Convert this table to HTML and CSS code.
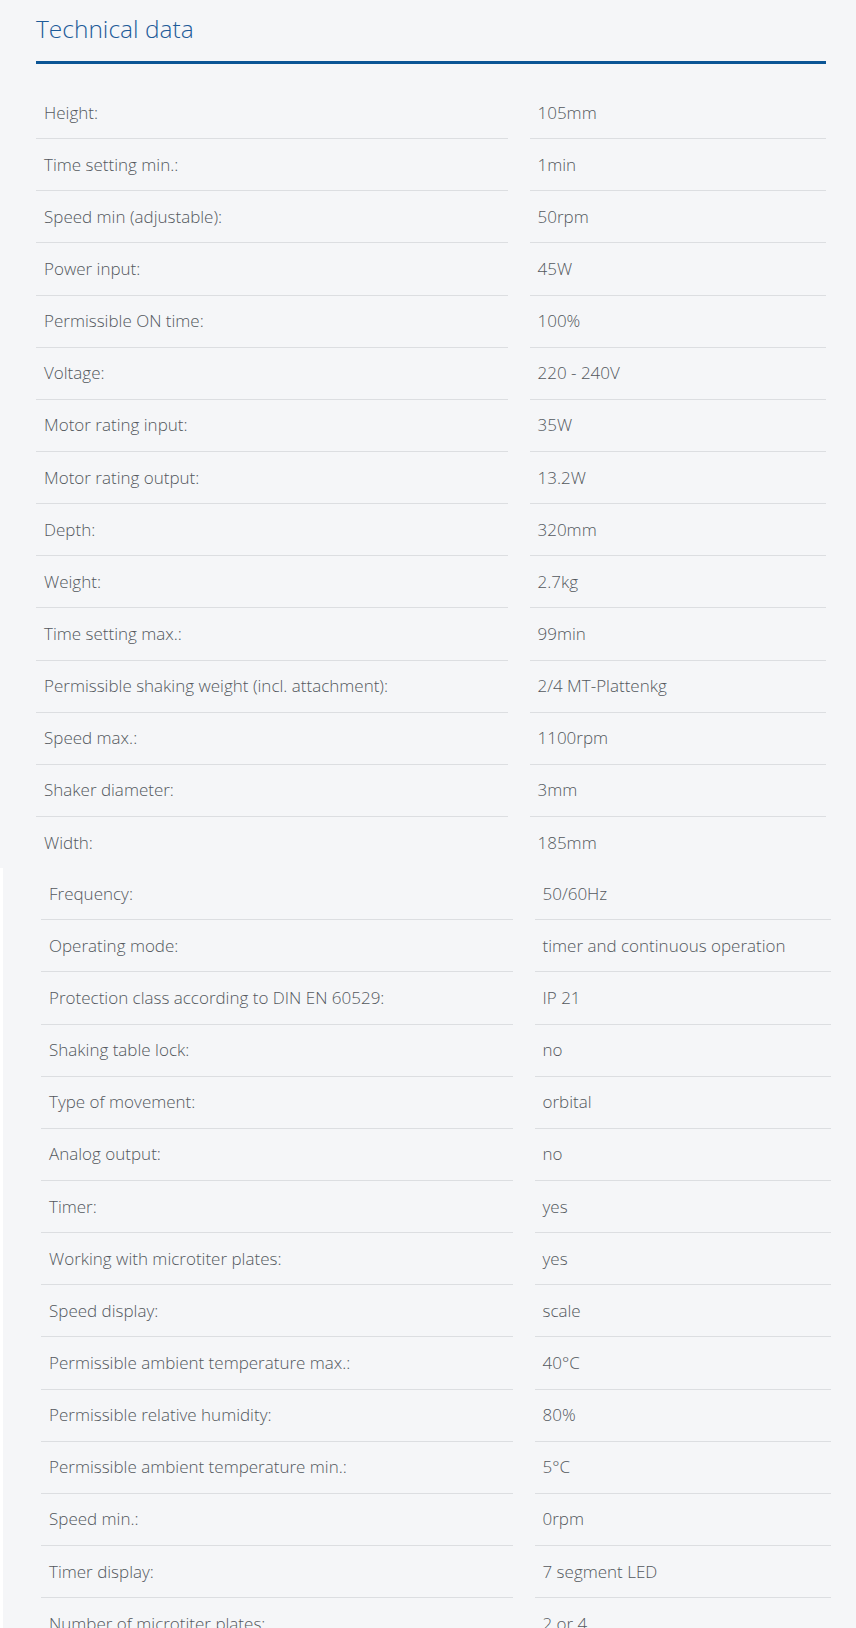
FILE: index.html
```html
<!DOCTYPE html>
<html lang="en">
<head>
<meta charset="utf-8">
<title>Technical data</title>
<link rel="stylesheet" href="styles.css">
</head>
<body>
<main class="page">
  <h2 class="title">Technical data</h2>

  <div class="spec">
    <div class="row"><div class="key">Height:</div><div class="val">105mm</div></div>
    <div class="row"><div class="key">Time setting min.:</div><div class="val">1min</div></div>
    <div class="row"><div class="key">Speed min (adjustable):</div><div class="val">50rpm</div></div>
    <div class="row"><div class="key">Power input:</div><div class="val">45W</div></div>
    <div class="row"><div class="key">Permissible ON time:</div><div class="val">100%</div></div>
    <div class="row"><div class="key">Voltage:</div><div class="val">220 - 240V</div></div>
    <div class="row"><div class="key">Motor rating input:</div><div class="val">35W</div></div>
    <div class="row"><div class="key">Motor rating output:</div><div class="val">13.2W</div></div>
    <div class="row"><div class="key">Depth:</div><div class="val">320mm</div></div>
    <div class="row"><div class="key">Weight:</div><div class="val">2.7kg</div></div>
    <div class="row"><div class="key">Time setting max.:</div><div class="val">99min</div></div>
    <div class="row"><div class="key">Permissible shaking weight (incl. attachment):</div><div class="val">2/4 MT-Plattenkg</div></div>
    <div class="row"><div class="key">Speed max.:</div><div class="val">1100rpm</div></div>
    <div class="row"><div class="key">Shaker diameter:</div><div class="val">3mm</div></div>
    <div class="row"><div class="key">Width:</div><div class="val">185mm</div></div>
  </div>

  <div class="spec spec-more">
    <div class="row"><div class="key">Frequency:</div><div class="val">50/60Hz</div></div>
    <div class="row"><div class="key">Operating mode:</div><div class="val">timer and continuous operation</div></div>
    <div class="row"><div class="key">Protection class according to DIN EN 60529:</div><div class="val">IP 21</div></div>
    <div class="row"><div class="key">Shaking table lock:</div><div class="val">no</div></div>
    <div class="row"><div class="key">Type of movement:</div><div class="val">orbital</div></div>
    <div class="row"><div class="key">Analog output:</div><div class="val">no</div></div>
    <div class="row"><div class="key">Timer:</div><div class="val">yes</div></div>
    <div class="row"><div class="key">Working with microtiter plates:</div><div class="val">yes</div></div>
    <div class="row"><div class="key">Speed display:</div><div class="val">scale</div></div>
    <div class="row"><div class="key">Permissible ambient temperature max.:</div><div class="val">40°C</div></div>
    <div class="row"><div class="key">Permissible relative humidity:</div><div class="val">80%</div></div>
    <div class="row"><div class="key">Permissible ambient temperature min.:</div><div class="val">5°C</div></div>
    <div class="row"><div class="key">Speed min.:</div><div class="val">0rpm</div></div>
    <div class="row"><div class="key">Timer display:</div><div class="val">7 segment LED</div></div>
    <div class="row"><div class="key">Number of microtiter plates:</div><div class="val">2 or 4</div></div>
  </div>
</main>
</body>
</html>
```

FILE: styles.css
```css
html, body {
  margin: 0;
  padding: 0;
  background: #f5f6f8;
}

body {
  font-family: "Open Sans", "Noto Sans", sans-serif;
  font-weight: 300;
  color: #53585d;
}

.page {
  padding: 0 30px 0 36px;
}

.title {
  margin: 0 0 23px 0;
  padding: 13px 0 17px 0;
  font-size: 24.5px;
  line-height: 31px;
  font-weight: 300;
  color: #1d5b98;
  border-bottom: 3px solid #0b5595;
}

.row {
  display: grid;
  grid-template-columns: 1fr 296.5px;
  column-gap: 22px;
}

.key,
.val {
  padding: 13.6px 8px 13.55px 8px;
  font-size: 17px;
  line-height: 24px;
  border-bottom: 1px solid #dcdee1;
}

.spec .row:last-child .key,
.spec .row:last-child .val {
  border-bottom: none;
}

.spec-more {
  margin-left: -36px;
  margin-right: -5px;
  padding-left: 38px;
  border-left: 3px solid #ffffff;
}

.spec-more .row:last-child .key,
.spec-more .row:last-child .val {
  border-bottom: 1px solid #dcdee1;
}
```
